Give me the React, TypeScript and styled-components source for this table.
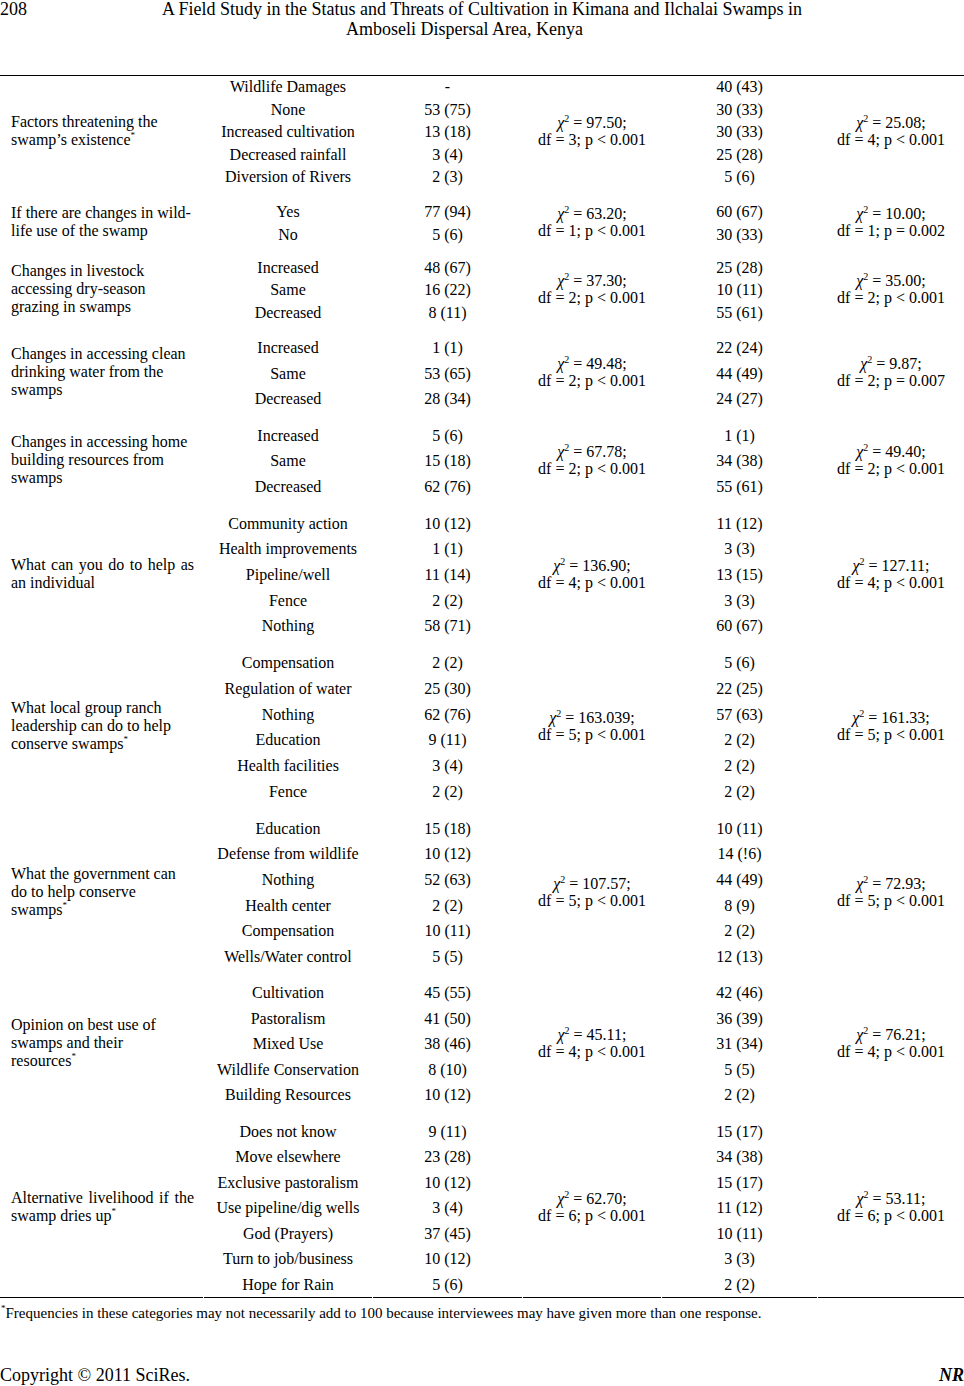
import React from "react";
import styled, { createGlobalStyle } from "styled-components";

const Global = createGlobalStyle`
  html, body { margin: 0; padding: 0; background: #fff; }
  body { font-family: "Liberation Serif", "Times New Roman", serif; color: #000; }
`;

type Row = [string, string, string];
type Section = {
  label: string[];
  justifyFirst?: boolean;
  star?: boolean;
  rows: Row[];
  chi1: [string, string];
  chi2: [string, string];
  pitch: number;
};

const sections: Section[] = [
  {
    label: ["Factors threatening the", "swamp’s existence"],
    star: true,
    rows: [
      ["Wildlife Damages", "-", "40 (43)"],
      ["None", "53 (75)", "30 (33)"],
      ["Increased cultivation", "13 (18)", "30 (33)"],
      ["Decreased rainfall", "3 (4)", "25 (28)"],
      ["Diversion of Rivers", "2 (3)", "5 (6)"],
    ],
    chi1: ["97.50;", "df = 3; p < 0.001"],
    chi2: ["25.08;", "df = 4; p < 0.001"],
    pitch: 22.5,
  },
  {
    label: ["If there are changes in wild-", "life use of the swamp"],
    rows: [
      ["Yes", "77 (94)", "60 (67)"],
      ["No", "5 (6)", "30 (33)"],
    ],
    chi1: ["63.20;", "df = 1; p < 0.001"],
    chi2: ["10.00;", "df = 1; p = 0.002"],
    pitch: 23,
  },
  {
    label: ["Changes in livestock", "accessing dry-season", "grazing in swamps"],
    rows: [
      ["Increased", "48 (67)", "25 (28)"],
      ["Same", "16 (22)", "10 (11)"],
      ["Decreased", "8 (11)", "55 (61)"],
    ],
    chi1: ["37.30;", "df = 2; p < 0.001"],
    chi2: ["35.00;", "df = 2; p < 0.001"],
    pitch: 22.5,
  },
  {
    label: ["Changes in accessing clean", "drinking water from the", "swamps"],
    rows: [
      ["Increased", "1 (1)", "22 (24)"],
      ["Same", "53 (65)", "44 (49)"],
      ["Decreased", "28 (34)", "24 (27)"],
    ],
    chi1: ["49.48;", "df = 2; p < 0.001"],
    chi2: ["9.87;", "df = 2; p = 0.007"],
    pitch: 25.6,
  },
  {
    label: ["Changes in accessing home", "building resources from", "swamps"],
    rows: [
      ["Increased", "5 (6)", "1 (1)"],
      ["Same", "15 (18)", "34 (38)"],
      ["Decreased", "62 (76)", "55 (61)"],
    ],
    chi1: ["67.78;", "df = 2; p < 0.001"],
    chi2: ["49.40;", "df = 2; p < 0.001"],
    pitch: 25.6,
  },
  {
    label: ["What can you do to help as", "an individual"],
    justifyFirst: true,
    rows: [
      ["Community action", "10 (12)", "11 (12)"],
      ["Health improvements", "1 (1)", "3 (3)"],
      ["Pipeline/well", "11 (14)", "13 (15)"],
      ["Fence", "2 (2)", "3 (3)"],
      ["Nothing", "58 (71)", "60 (67)"],
    ],
    chi1: ["136.90;", "df = 4; p < 0.001"],
    chi2: ["127.11;", "df = 4; p < 0.001"],
    pitch: 25.7,
  },
  {
    label: ["What local group ranch", "leadership can do to help", "conserve swamps"],
    star: true,
    rows: [
      ["Compensation", "2 (2)", "5 (6)"],
      ["Regulation of water", "25 (30)", "22 (25)"],
      ["Nothing", "62 (76)", "57 (63)"],
      ["Education", "9 (11)", "2 (2)"],
      ["Health facilities", "3 (4)", "2 (2)"],
      ["Fence", "2 (2)", "2 (2)"],
    ],
    chi1: ["163.039;", "df = 5; p < 0.001"],
    chi2: ["161.33;", "df = 5; p < 0.001"],
    pitch: 25.8,
  },
  {
    label: ["What the government can", "do to help conserve", "swamps"],
    star: true,
    rows: [
      ["Education", "15 (18)", "10 (11)"],
      ["Defense from wildlife", "10 (12)", "14 (!6)"],
      ["Nothing", "52 (63)", "44 (49)"],
      ["Health center", "2 (2)", "8 (9)"],
      ["Compensation", "10 (11)", "2 (2)"],
      ["Wells/Water control", "5 (5)", "12 (13)"],
    ],
    chi1: ["107.57;", "df = 5; p < 0.001"],
    chi2: ["72.93;", "df = 5; p < 0.001"],
    pitch: 25.6,
  },
  {
    label: ["Opinion on best use of", "swamps and their", "resources"],
    star: true,
    rows: [
      ["Cultivation", "45 (55)", "42 (46)"],
      ["Pastoralism", "41 (50)", "36 (39)"],
      ["Mixed Use", "38 (46)", "31 (34)"],
      ["Wildlife Conservation", "8 (10)", "5 (5)"],
      ["Building Resources", "10 (12)", "2 (2)"],
    ],
    chi1: ["45.11;", "df = 4; p < 0.001"],
    chi2: ["76.21;", "df = 4; p < 0.001"],
    pitch: 25.5,
  },
  {
    label: ["Alternative livelihood if the", "swamp dries up"],
    justifyFirst: true,
    star: true,
    rows: [
      ["Does not know", "9 (11)", "15 (17)"],
      ["Move elsewhere", "23 (28)", "34 (38)"],
      ["Exclusive pastoralism", "10 (12)", "15 (17)"],
      ["Use pipeline/dig wells", "3 (4)", "11 (12)"],
      ["God (Prayers)", "37 (45)", "10 (11)"],
      ["Turn to job/business", "10 (12)", "3 (3)"],
      ["Hope for Rain", "5 (6)", "2 (2)"],
    ],
    chi1: ["62.70;", "df = 6; p < 0.001"],
    chi2: ["53.11;", "df = 6; p < 0.001"],
    pitch: 25.5,
  },
];

const Page = styled.div`
  width: 964px;
  height: 1386px;
  overflow: hidden;
  display: flex;
  flex-direction: column;
`;

const Header = styled.header`
  display: flex;
  align-items: flex-start;
  font-size: 18px;
  line-height: 19.5px;
  height: 75px;
`;

const PageNum = styled.div`
  width: 30px;
`;

const Title = styled.div`
  flex: 1;
  display: flex;
  flex-direction: column;
  align-items: center;
  padding-right: 30px;
`;

const TitleLine = styled.div<{ $shift?: number }>`
  white-space: nowrap;
  margin-right: ${(p) => p.$shift ?? 0}px;
`;

const Table = styled.div`
  border-top: 1.5px solid #000;
  display: flex;
  flex-direction: column;
  gap: 11px;
  font-size: 16px;
`;

const SectionRow = styled.div<{ $last?: boolean }>`
  display: grid;
  grid-template-columns: 203px 168px 149px 138px 155px 146px;
  column-gap: 1px;
  & > * {
    border-bottom: ${(p) => (p.$last ? "1.5px solid #000" : "none")};
  }
`;

const LabelCell = styled.div`
  display: flex;
  flex-direction: column;
  justify-content: center;
  padding: 0 9px 2px 11px;
  line-height: 18px;
`;

const LabelLine = styled.div<{ $justify?: boolean }>`
  white-space: nowrap;
  ${(p) =>
    p.$justify
      ? `text-align: justify; text-align-last: justify; white-space: normal;`
      : ""}
`;

const Star = styled.sup`
  font-size: 9px;
  line-height: 0;
  vertical-align: 7px;
`;

const ListCell = styled.div<{ $pitch: number }>`
  display: flex;
  flex-direction: column;
  align-items: center;
  line-height: ${(p) => p.$pitch}px;
  white-space: nowrap;
`;

const ChiCell = styled.div`
  display: flex;
  flex-direction: column;
  align-items: center;
  justify-content: center;
  line-height: 17px;
  white-space: nowrap;
  padding-bottom: 2px;
`;

const ChiSym = styled.i`
  font-style: italic;
`;

const Sq = styled.sup`
  font-size: 10px;
  line-height: 0;
  vertical-align: 6px;
`;

const Footnote = styled.div`
  font-size: 15px;
  line-height: 18px;
  margin-top: 6px;
  padding-left: 1px;
  white-space: nowrap;
`;

const FootStar = styled.sup`
  font-size: 9px;
  line-height: 0;
  vertical-align: 7px;
`;

const Copyright = styled.footer`
  margin-top: auto;
  display: flex;
  justify-content: space-between;
  align-items: baseline;
  font-size: 18px;
  line-height: 20px;
  padding-bottom: 1px;
`;

const Journal = styled.b`
  font-style: italic;
  font-weight: bold;
`;

const Chi: React.FC<{ v: [string, string] }> = ({ v }) => (
  <ChiCell>
    <div>
      <ChiSym>χ</ChiSym>
      <Sq>2</Sq> = {v[0]}
    </div>
    <div>{v[1]}</div>
  </ChiCell>
);

export default function App() {
  return (
    <Page>
      <Global />
      <Header>
        <PageNum>208</PageNum>
        <Title>
          <TitleLine>
            A Field Study in the Status and Threats of Cultivation in Kimana and Ilchalai Swamps in
          </TitleLine>
          <TitleLine $shift={35}>Amboseli Dispersal Area, Kenya</TitleLine>
        </Title>
      </Header>
      <Table>
        {sections.map((s, i) => (
          <SectionRow key={i} $last={i === sections.length - 1}>
            <LabelCell>
              {s.label.map((l, j) => (
                <LabelLine key={j} $justify={s.justifyFirst && j === 0}>
                  {l}
                  {s.star && j === s.label.length - 1 ? <Star>*</Star> : null}
                </LabelLine>
              ))}
            </LabelCell>
            <ListCell $pitch={s.pitch}>
              {s.rows.map((r, j) => (
                <div key={j}>{r[0]}</div>
              ))}
            </ListCell>
            <ListCell $pitch={s.pitch}>
              {s.rows.map((r, j) => (
                <div key={j}>{r[1]}</div>
              ))}
            </ListCell>
            <Chi v={s.chi1} />
            <ListCell $pitch={s.pitch}>
              {s.rows.map((r, j) => (
                <div key={j}>{r[2]}</div>
              ))}
            </ListCell>
            <Chi v={s.chi2} />
          </SectionRow>
        ))}
      </Table>
      <Footnote>
        <FootStar>*</FootStar>Frequencies in these categories may not necessarily add to 100 because
        interviewees may have given more than one response.
      </Footnote>
      <Copyright>
        <span>Copyright © 2011 SciRes.</span>
        <Journal>NR</Journal>
      </Copyright>
    </Page>
  );
}
